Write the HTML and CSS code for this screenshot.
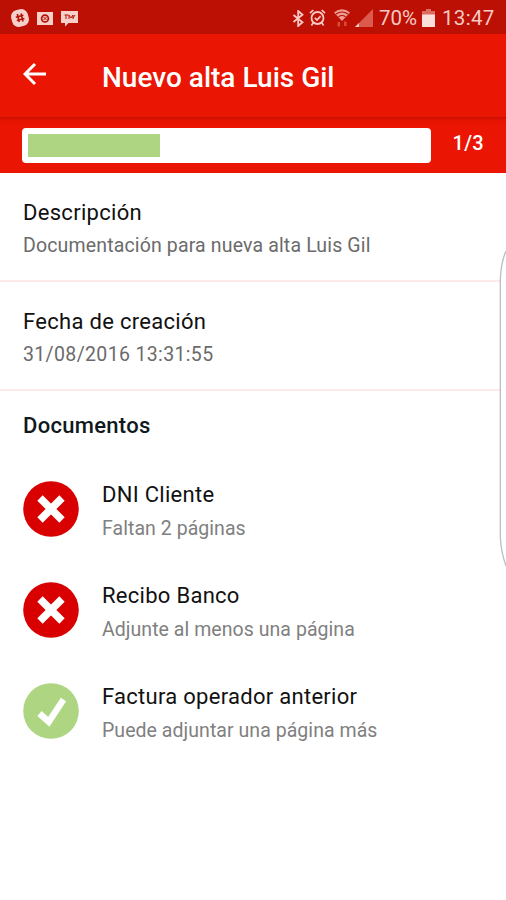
FILE: index.html
```html
<!DOCTYPE html>
<html lang="es">
<head>
  <meta charset="UTF-8">
  <meta name="viewport" content="width=device-width, initial-scale=1.0">
  <title>Nuevo alta Luis Gil</title>
  <link rel="stylesheet" href="styles.css">
</head>
<body>
  <div class="status-bar">
    <div class="status-bar__left">
      <svg width="18" height="18" viewBox="0 0 18 18">
        <rect x="0.5" y="0.5" width="17" height="17" rx="6.5" fill="#f7cfcb" transform="rotate(-15 9 9)"/>
        <path d="M6.3 5l2 8M10 4.5l2 8M4.8 8.2l7.6-2M5.8 11.6l7.6-2" stroke="#b51205" stroke-width="1.6"/>
      </svg>
      <svg width="16" height="13" viewBox="0 0 16 13">
        <rect width="16" height="13" fill="#f7cfcb"/>
        <circle cx="8" cy="6.5" r="3.4" fill="none" stroke="#b51205" stroke-width="1.7"/>
        <path d="M6.5 5l3 3M9.5 5l-3 3" stroke="#b51205"/>
      </svg>
      <svg width="17" height="16" viewBox="0 0 17 16">
        <path d="M0 0h17v12H7.5L4 15.5V12H0z" fill="#f7cfcb"/>
        <path d="M3.5 4h4M5 4v4M8 4v4M8 4l2 3 2-3v4M12 7l2-3" fill="none" stroke="#b51205"/>
      </svg>
    </div>
    <div class="status-bar__right">
      <svg class="bluetooth" width="12" height="17" viewBox="0 0 12 17">
        <path d="M1.5 5l9 7.2L6.2 16V1l4.3 3.8-9 7.2" fill="none" stroke="#f9cac5" stroke-width="1.8"/>
      </svg>
      <svg class="alarm" width="17" height="18" viewBox="0 0 17 18">
        <circle cx="8.5" cy="9" r="6" fill="none" stroke="#f9cac5" stroke-width="1.8"/>
        <path d="M5.8 8.8l2.2 2.3 3.6-4M1 4.2L4.3 1M16 4.2L12.7 1M4.4 13.5l-2 3M12.6 13.5l2 3" fill="none" stroke="#f9cac5" stroke-width="1.7"/>
      </svg>
      <svg class="wifi" width="16" height="18" viewBox="0 0 16 18">
        <path d="M0 3.5Q8-3 16 3.5L8 12z" fill="#ef9c93"/>
        <path d="M2 5q6-4 12 0M4.5 7.8q3.5-2.5 7 0" fill="none" stroke="#b51205" stroke-width="1.1"/>
        <path d="M4.8 17.5V13M11.3 12.5V17" stroke="#d84b3d" stroke-width="2.5"/>
      </svg>
      <svg class="signal" width="18" height="18" viewBox="0 0 18 18">
        <path d="M0 18L18 0v18z" fill="#db5a4d"/>
        <path d="M0 18l4-4v4z" fill="#f9cac5"/>
      </svg>
      <span class="battery-level">70%</span>
      <svg class="battery" width="13" height="18" viewBox="0 0 13 18">
        <path d="M4 0h5v2h4v4H0V2h4z" fill="#dc6c60"/>
        <path d="M0 5.5h13V18H0z" fill="#fbdfdb"/>
      </svg>
      <span class="clock">13:47</span>
    </div>
  </div>

  <header class="toolbar">
    <svg class="back-icon" width="24" height="24" viewBox="0 0 24 24">
      <path d="M23 12H2M12 2L2 12l10 10" fill="none" stroke="#fff" stroke-width="3"/>
    </svg>
    <h1 class="toolbar__title">Nuevo alta Luis Gil</h1>
  </header>

  <div class="progress">
    <div class="progress__track">
      <div class="progress__bar" style="width: 33.4%;"></div>
    </div>
    <span class="progress__count">1/3</span>
  </div>

  <main>
    <section class="field">
      <h2 class="field__label">Descripción</h2>
      <p class="field__value">Documentación para nueva alta Luis Gil</p>
    </section>
    <section class="field">
      <h2 class="field__label">Fecha de creación</h2>
      <p class="field__value field__value--date">31/08/2016 13:31:55</p>
    </section>

    <section class="documents">
      <h2 class="documents__title">Documentos</h2>
      <ul class="documents__list">
        <li class="document">
          <svg class="document__icon" width="56" height="56" viewBox="0 0 56 56">
            <circle cx="28" cy="28" r="27.8" fill="#d80000"/>
            <path d="M17 17l22 22M39 17L17 39" stroke="#fff" stroke-width="7.6"/>
          </svg>
          <div class="document__text">
            <h3>DNI Cliente</h3>
            <p>Faltan 2 páginas</p>
          </div>
        </li>
        <li class="document">
          <svg class="document__icon" width="56" height="56" viewBox="0 0 56 56">
            <circle cx="28" cy="28" r="27.8" fill="#d80000"/>
            <path d="M17 17l22 22M39 17L17 39" stroke="#fff" stroke-width="7.6"/>
          </svg>
          <div class="document__text">
            <h3>Recibo Banco</h3>
            <p>Adjunte al menos una página</p>
          </div>
        </li>
        <li class="document">
          <svg class="document__icon" width="56" height="56" viewBox="0 0 56 56">
            <circle cx="28" cy="28" r="27.8" fill="#aed581"/>
            <path d="M16.5 30.5l9.3 8.3L40.5 16.5" fill="none" stroke="#fff" stroke-width="6.4"/>
          </svg>
          <div class="document__text">
            <h3>Factura operador anterior</h3>
            <p>Puede adjuntar una página más</p>
          </div>
        </li>
      </ul>
    </section>
  </main>

  <!-- edge panel handle -->
  <svg class="edge-handle" width="7" height="318" viewBox="0 0 7 318">
    <path d="M7 0Q2 12 1.8 30V287Q2 302 7 317V0z" fill="#fff"/>
    <path d="M7 1Q2 12 1.3 30V287Q2 302 7 316" fill="none" stroke="#bdbdbd" stroke-width="1.3"/>
  </svg>
</body>
</html>
```

FILE: styles.css
```css
* {
  box-sizing: border-box;
  margin: 0;
  padding: 0;
}

body {
  font-family: Roboto, sans-serif;
  background-color: #fff;
  color: #111;
  height: 100vh;
  overflow: hidden;
}

svg {
  display: block;
  flex-shrink: 0;
}

h1, h2, h3 {
  font-weight: 400;
  white-space: nowrap;
}

.status-bar {
  background-color: #bb1003;
  height: 34px;
  display: flex;
  justify-content: space-between;
  align-items: center;
  padding: 2px 12px 0 11px;
}

.status-bar__left {
  display: flex;
  align-items: center;
  gap: 8px;
}

.status-bar__left svg:last-child {
  margin-top: 1px;
}

.status-bar__right {
  display: flex;
  align-items: center;
  color: #f9cac5;
  font-size: 20.5px;
  line-height: 24px;
}

.alarm {
  margin-left: 5px;
}

.wifi {
  margin-left: 8px;
}

.signal {
  margin-left: 5px;
}

.battery-level {
  width: 39px;
  margin-left: 6px;
}

.battery {
  margin-left: 4px;
}

.clock {
  width: 52px;
  margin-left: 7px;
  letter-spacing: 0.3px;
}

.toolbar {
  background-color: #ea1502;
  height: 83px;
  display: flex;
  align-items: center;
  padding: 0 23px 4px;
}

.back-icon {
  margin-top: 1px;
}

.toolbar__title {
  color: #fff;
  font-size: 28px;
  font-weight: 500;
  line-height: 32px;
  margin: 8px 0 0 55px;
}

.progress {
  background: linear-gradient(#c51002, #e41302 3px, #ea1502 7px);
  height: 56px;
  display: flex;
  align-items: center;
  padding: 0 22px;
}

.progress__track {
  background-color: #fff;
  width: 409px;
  height: 35px;
  border-radius: 4px;
  padding: 6px;
}

.progress__bar {
  background-color: #aed581;
  height: 23px;
}

.progress__count {
  color: #fff;
  font-size: 20px;
  font-weight: 500;
  line-height: 24px;
  letter-spacing: 0.3px;
  margin: 0 0 5px 22px;
}

.field {
  height: 109px;
  padding: 27px 23px 0;
  border-bottom: 2px solid #fdeaea;
}

.field__label {
  font-size: 22px;
  line-height: 26px;
  letter-spacing: 0.3px;
}

.field__value {
  color: #6b6b6b;
  font-size: 19.5px;
  line-height: 24px;
  letter-spacing: 0.15px;
  margin-top: 8px;
  white-space: nowrap;
}

.field__value--date {
  letter-spacing: 0.35px;
}

.documents {
  padding: 22px 23px 0;
}

.documents__title {
  font-size: 22px;
  font-weight: 500;
  line-height: 26px;
  letter-spacing: 0.3px;
  color: #101820;
}

.documents__list {
  list-style: none;
  margin-top: 42px;
}

.document {
  display: flex;
  gap: 23px;
  height: 101px;
}

.document__text {
  padding-top: 1px;
}

.document h3 {
  font-size: 22px;
  line-height: 26px;
  letter-spacing: 0.28px;
}

.document p {
  color: #808080;
  font-size: 19.5px;
  line-height: 24px;
  letter-spacing: 0.05px;
  margin-top: 9px;
  white-space: nowrap;
}

.edge-handle {
  position: absolute;
  top: 250px;
  right: 0;
}
```
